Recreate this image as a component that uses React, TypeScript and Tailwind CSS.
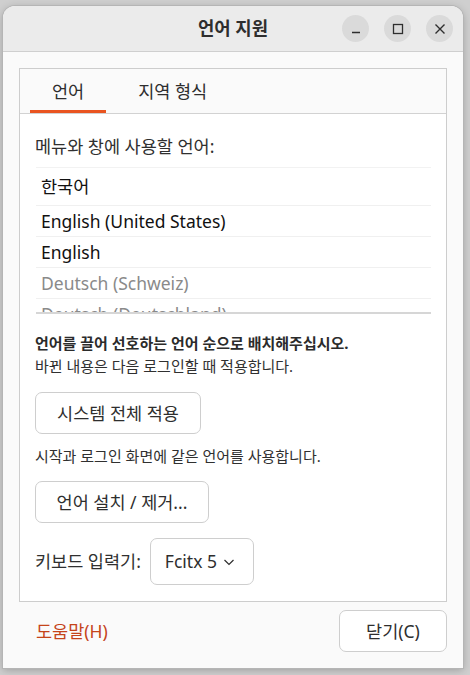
import React from 'react';

const font = { fontFamily: "'Noto Sans', 'Noto Sans CJK KR', sans-serif" };

const languages = [
  { name: '한국어', active: true, h: 'h-[38px]' },
  { name: 'English (United States)', active: true, h: 'h-[31px]' },
  { name: 'English', active: true, h: 'h-[31px]' },
  { name: 'Deutsch (Schweiz)', active: false, h: 'h-[31px]' },
  { name: 'Deutsch (Deutschland)', active: false, h: 'h-[31px]' },
];

function TitleButton({ children }: { children: React.ReactNode }) {
  return (
    <div className="w-[27px] h-[27px] rounded-full bg-[#dadada] flex items-center justify-center text-[#2e2e2e]">
      {children}
    </div>
  );
}

export default function App() {
  return (
    <div className="w-[470px] h-[675px] bg-[#cfcfcf] pt-[6px] pl-[3px] overflow-hidden" style={font}>
      <div className="w-[460px] h-[662px] rounded-t-[12px] bg-[#fafafa] shadow-[0_0_0_1px_#b5b5b5,0_2px_8px_rgba(0,0,0,0.25)] flex flex-col overflow-hidden">
        {/* header bar */}
        <div className="h-[46px] shrink-0 bg-[#ebebeb] border-b border-[#cfcfcf] grid grid-cols-[1fr_auto_1fr] items-center">
          <div />
          <div className="text-[17.8px] font-bold text-[#2e2e2e]">언어 지원</div>
          <div className="flex justify-end gap-[15px] pr-[10px]">
            <TitleButton>
              <svg width="12" height="12" viewBox="0 0 12 12"><path d="M2 9.5h8" stroke="currentColor" strokeWidth="1.3" /></svg>
            </TitleButton>
            <TitleButton>
              <svg width="12" height="12" viewBox="0 0 12 12"><rect x="1.5" y="1.5" width="9" height="9" fill="none" stroke="currentColor" strokeWidth="1.3" /></svg>
            </TitleButton>
            <TitleButton>
              <svg width="12" height="12" viewBox="0 0 12 12"><path d="M1.5 1.5l9 9M10.5 1.5l-9 9" stroke="currentColor" strokeWidth="1.4" /></svg>
            </TitleButton>
          </div>
        </div>

        <div className="flex-1 flex flex-col px-[16px] pt-[16px]">
          {/* notebook */}
          <div className="border border-[#cdcdcd] bg-white flex flex-col">
            <div className="h-[45px] bg-[#fafafa] border-b border-[#d2d2d2] flex items-stretch pl-[10px] gap-[10px]">
              <div className="relative px-[22px] flex items-center text-[17.5px] text-[#2e2e2e]">
                언어
                <div className="absolute left-0 right-0 bottom-0 h-[3px] bg-[#e95420]" />
              </div>
              <div className="px-[22px] flex items-center text-[17.5px] text-[#2e2e2e]">지역 형식</div>
            </div>

            <div className="flex flex-col px-[15px] pt-[20px] pb-[16px] text-[#303030]">
              <div className="text-[17.5px] leading-[24px]">메뉴와 창에 사용할 언어:</div>

              <div className="mt-[9px] ml-px h-[147px] overflow-hidden border-t border-[#f2f2f2] border-b-2 border-b-[#d6d6d6] flex flex-col">
                {languages.map((l) => (
                  <div
                    key={l.name}
                    className={`${l.h} shrink-0 px-[5px] flex items-center border-b border-[#f0f0f0] text-[17.5px] ${l.active ? 'text-[#111111]' : 'text-[#8a8a8a]'}`}
                  >
                    {l.name}
                  </div>
                ))}
              </div>

              <div className="mt-[18px] text-[15px] leading-[23px] font-bold text-[#2b2b2b]">언어를 끌어 선호하는 언어 순으로 배치해주십시오.</div>
              <div className="text-[15px] leading-[23px]">바뀐 내용은 다음 로그인할 때 적용합니다.</div>

              <button className="mt-[14px] w-[166px] h-[42px] rounded-[7px] border border-[#cecece] bg-white text-[17.5px] text-[#2e2e2e]">
                시스템 전체 적용
              </button>

              <div className="mt-[11px] text-[15px] leading-[22px]">시작과 로그인 화면에 같은 언어를 사용합니다.</div>

              <button className="mt-[14px] w-[174px] h-[42px] rounded-[7px] border border-[#cecece] bg-white text-[17.5px] text-[#2e2e2e]">
                언어 설치 / 제거...
              </button>

              <div className="mt-[15px] flex items-center gap-[9px]">
                <span className="text-[17.5px]">키보드 입력기:</span>
                <div className="w-[104px] h-[47px] rounded-[7px] border border-[#cecece] bg-white flex items-center pl-[14px] gap-[6px] text-[17.5px] text-[#2e2e2e]">
                  Fcitx 5
                  <svg width="12" height="12" viewBox="0 0 12 12"><path d="M1.5 4l4.5 4.5L10.5 4" fill="none" stroke="currentColor" strokeWidth="1.2" /></svg>
                </div>
              </div>
            </div>
          </div>

          {/* footer */}
          <div className="mt-[8px] flex items-center justify-between">
            <span className="pl-[17px] text-[17.5px] text-[#c5441a]">도움말(H)</span>
            <button className="w-[108px] h-[42px] rounded-[7px] border border-[#cecece] bg-white text-[17.5px] text-[#2e2e2e]">
              닫기(C)
            </button>
          </div>
        </div>
      </div>
    </div>
  );
}
